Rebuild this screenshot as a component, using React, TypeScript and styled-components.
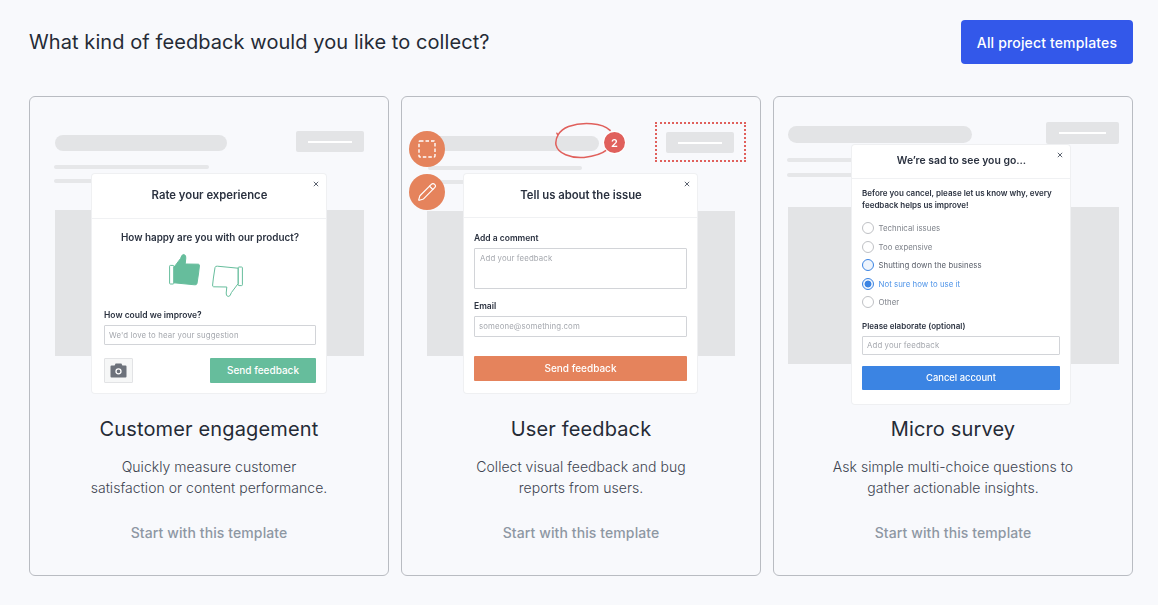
import styled, { createGlobalStyle } from "styled-components";
import { Pencil } from "lucide-react";

const GlobalStyle = createGlobalStyle`
  html, body {
    margin: 0;
    background: #f8f9fc;
    font-family: Inter, "Liberation Sans", sans-serif;
    color: #252b36;
  }
  * { box-sizing: border-box; }
`;

function ThumbIcon(props: { down?: boolean }) {
  return (
    <ThumbSvg viewBox="0 0 31 32" $down={props.down}>
      <rect x="0.6" y="11.4" width="4.2" height="18.6" rx="0.8" fill="#fff" stroke="#66bd9c" strokeWidth="1" />
      <path
        d="M5 13.2 L11.6 4.4 Q12.6 0.4 14.8 0.5 Q17.2 1 16.8 4 L16.2 10 L29.4 10.2 Q30.6 10.4 30.4 12 L29.6 19 L28 29.4 Q27.6 31.2 25.6 30.8 L5 28.8 Z"
        fill={props.down ? "#fff" : "#66bd9c"}
        stroke="#66bd9c"
        strokeWidth="1"
        strokeLinejoin="round"
      />
    </ThumbSvg>
  );
}

function CloseIcon() {
  return (
    <CloseSvg viewBox="0 0 6 6">
      <path d="M0.8 0.8 L5.2 5.2 M5.2 0.8 L0.8 5.2" stroke="#4b5261" strokeWidth="0.9" />
    </CloseSvg>
  );
}

function CameraIcon() {
  return (
    <svg width="17" height="15" viewBox="0 0 17 15">
      <path
        d="M1.5 2.5 H4.6 L5.6 0.5 H11.4 L12.4 2.5 H15.5 Q16.5 2.5 16.5 3.5 V13.5 Q16.5 14.5 15.5 14.5 H1.5 Q0.5 14.5 0.5 13.5 V3.5 Q0.5 2.5 1.5 2.5 Z"
        fill="#6d727b"
      />
      <circle cx="8.5" cy="8.3" r="2.5" fill="none" stroke="#fff" strokeWidth="1.3" />
    </svg>
  );
}

function SelectIcon() {
  return (
    <svg width="18" height="18" viewBox="0 0 18 18">
      <rect x="1" y="1" width="16" height="16" rx="1" fill="none" stroke="#fff" strokeWidth="1.4" strokeDasharray="3.5 2" />
    </svg>
  );
}

function Backdrop(props: { pill: number[]; btn: number[]; line: number[]; rows: number[][]; block: number[] }) {
  return (
    <>
      <Pill $x={props.pill[0]} $y={props.pill[1]} $w={props.pill[2]} $h={props.pill[3]} />
      <GhostButton $x={props.btn[0]} $y={props.btn[1]} $w={props.btn[2]} $h={props.btn[3]}>
        <GhostLine $w={props.line[0]} />
      </GhostButton>
      {props.rows.map((r, i) => (
        <TextRow key={i} $x={r[0]} $y={r[1]} $w={r[2]} />
      ))}
      <Block $x={props.block[0]} $y={props.block[1]} $w={props.block[2]} $h={props.block[3]} />
    </>
  );
}

function EngagementPreview() {
  return (
    <Illustration>
      <Backdrop pill={[25, 38, 172, 16]} btn={[266, 34, 68, 21]} line={[44]} rows={[[24, 68, 155], [24, 82, 60]]} block={[25, 113, 309, 146]} />
      <Modal $x={62} $y={77} $w={234} $h={219}>
        <ModalHeader $h={45}>
          <ModalTitle>Rate your experience</ModalTitle>
          <CloseIcon />
        </ModalHeader>
        <ModalBody $pad="11px 10px 0 12px">
          <Question>How happy are you with our product?</Question>
          <Thumbs>
            <ThumbIcon />
            <ThumbIcon down />
          </Thumbs>
          <FieldLabel>How could we improve?</FieldLabel>
          <FakeInput $h={20}>We'd love to hear your suggestion</FakeInput>
          <ActionRow>
            <CameraButton>
              <CameraIcon />
            </CameraButton>
            <SendButton $bg="#66bd9c" $w={106}>
              Send feedback
            </SendButton>
          </ActionRow>
        </ModalBody>
      </Modal>
    </Illustration>
  );
}

function FeedbackPreview() {
  return (
    <Illustration>
      <Backdrop pill={[25, 39, 172, 15]} btn={[264, 35, 68, 21]} line={[44]} rows={[[26, 69, 154], [26, 83, 60]]} block={[25, 114, 308, 145]} />
      <DottedFrame />
      <Squiggle viewBox="0 0 60 40">
        <path
          d="M57 9 C49 1 28 0 14 5 C4 9 0 17 1 24 C3 33 16 38 30 37 C40 36 49 33 54 29 M2 12 L3 14"
          fill="none"
          stroke="#e0605c"
          strokeWidth="1.6"
          strokeLinecap="round"
        />
      </Squiggle>
      <CountBadge>2</CountBadge>
      <ToolCircle $y={34}>
        <SelectIcon />
      </ToolCircle>
      <ToolCircle $y={77}>
        <Pencil size={20} strokeWidth={1.4} color="#fff" />
      </ToolCircle>
      <Modal $x={62} $y={77} $w={233} $h={219}>
        <ModalHeader $h={44}>
          <ModalTitle>Tell us about the issue</ModalTitle>
          <CloseIcon />
        </ModalHeader>
        <ModalBody $pad="15px 10px 0 10px">
          <FieldLabel>Add a comment</FieldLabel>
          <FakeInput $h={41} $top>
            Add your feedback
          </FakeInput>
          <FieldLabel $gap={12}>Email</FieldLabel>
          <FakeInput $h={21}>someone@something.com</FakeInput>
          <SendButton $bg="#e5835c" $mt={19}>
            Send feedback
          </SendButton>
        </ModalBody>
      </Modal>
    </Illustration>
  );
}

const surveyOptions = [
  { label: "Technical issues", state: "idle" },
  { label: "Too expensive", state: "idle" },
  { label: "Shutting down the business", state: "hover" },
  { label: "Not sure how to use it", state: "checked" },
  { label: "Other", state: "idle" },
] as const;

function SurveyPreview() {
  return (
    <Illustration>
      <Backdrop pill={[14, 29, 184, 17]} btn={[272, 25, 73, 22]} line={[47]} rows={[[13, 61, 70], [13, 76, 70]]} block={[14, 110, 331, 157]} />
      <Modal $x={78} $y={48} $w={218} $h={259}>
        <ModalHeader $h={34}>
          <ModalTitle $size={10.4}>We’re sad to see you go...</ModalTitle>
          <CloseIcon />
        </ModalHeader>
        <ModalBody $pad="9px 10px 0 10px">
          <Intro>Before you cancel, please let us know why, every feedback helps us improve!</Intro>
          <OptionList>
            {surveyOptions.map((o) => (
              <Option key={o.label} $state={o.state}>
                <Radio $state={o.state} />
                {o.label}
              </Option>
            ))}
          </OptionList>
          <FieldLabel $gap={13} $size={8}>
            Please elaborate (optional)
          </FieldLabel>
          <FakeInput $h={19}>Add your feedback</FakeInput>
          <SendButton $bg="#3b84e3" $mt={11} $h={24} $size={9.4}>
            Cancel account
          </SendButton>
        </ModalBody>
      </Modal>
    </Illustration>
  );
}

export default function App() {
  return (
    <>
      <GlobalStyle />
      <Page>
        <Header>
          <Title>What kind of feedback would you like to collect?</Title>
          <PrimaryButton>All project templates</PrimaryButton>
        </Header>
        <CardGrid>
          <TemplateCard>
            <EngagementPreview />
            <CardTitle>Customer engagement</CardTitle>
            <CardText>
              Quickly measure customer
              <br />
              satisfaction or content performance.
            </CardText>
            <CardLink>Start with this template</CardLink>
          </TemplateCard>
          <TemplateCard>
            <FeedbackPreview />
            <CardTitle>User feedback</CardTitle>
            <CardText>
              Collect visual feedback and bug
              <br />
              reports from users.
            </CardText>
            <CardLink>Start with this template</CardLink>
          </TemplateCard>
          <TemplateCard>
            <SurveyPreview />
            <CardTitle>Micro survey</CardTitle>
            <CardText>
              Ask simple multi-choice questions to
              <br />
              gather actionable insights.
            </CardText>
            <CardLink>Start with this template</CardLink>
          </TemplateCard>
        </CardGrid>
      </Page>
    </>
  );
}

const Page = styled.div`
  width: 1158px;
  height: 605px;
  padding: 20px 25px 0 29px;
  overflow: hidden;
`;

const Header = styled.header`
  display: flex;
  justify-content: space-between;
  align-items: center;
  height: 44px;
`;

const Title = styled.h1`
  margin: 0;
  font-size: 20px;
  font-weight: 400;
  line-height: 28px;
  letter-spacing: 0.08px;
  color: #252b36;
`;

const PrimaryButton = styled.button`
  width: 172px;
  height: 44px;
  border: 0;
  border-radius: 4px;
  background: #3358ea;
  color: #fff;
  font: 500 14px Inter, sans-serif;
  letter-spacing: 0.15px;
`;

const CardGrid = styled.div`
  display: grid;
  grid-template-columns: repeat(3, 360px);
  gap: 12px;
  margin-top: 32px;
`;

const TemplateCard = styled.article`
  height: 480px;
  border: 1px solid #b9bcc2;
  border-radius: 6px;
  text-align: center;
`;

/* the previews are one soft, scaled-down picture in the original */
const Illustration = styled.div`
  position: relative;
  height: 305px;
  filter: blur(0.25px);
`;

const Pill = styled.div<{ $x: number; $y: number; $w: number; $h: number }>`
  position: absolute;
  left: ${(p) => p.$x}px;
  top: ${(p) => p.$y}px;
  width: ${(p) => p.$w}px;
  height: ${(p) => p.$h}px;
  border-radius: 9px;
  background: #e3e4e6;
`;

const GhostButton = styled.div<{ $x: number; $y: number; $w: number; $h: number }>`
  position: absolute;
  left: ${(p) => p.$x}px;
  top: ${(p) => p.$y}px;
  width: ${(p) => p.$w}px;
  height: ${(p) => p.$h}px;
  display: flex;
  align-items: center;
  justify-content: center;
  border-radius: 2px;
  background: #e3e4e6;
`;

const GhostLine = styled.div<{ $w: number }>`
  width: ${(p) => p.$w}px;
  height: 2px;
  background: #fff;
`;

const TextRow = styled.div<{ $x: number; $y: number; $w: number }>`
  position: absolute;
  left: ${(p) => p.$x}px;
  top: ${(p) => p.$y}px;
  width: ${(p) => p.$w}px;
  height: 3.5px;
  border-radius: 2px;
  background: #e6e7e9;
`;

const Block = styled.div<{ $x: number; $y: number; $w: number; $h: number }>`
  position: absolute;
  left: ${(p) => p.$x}px;
  top: ${(p) => p.$y}px;
  width: ${(p) => p.$w}px;
  height: ${(p) => p.$h}px;
  background: #e3e4e6;
`;

const Modal = styled.div<{ $x: number; $y: number; $w: number; $h: number }>`
  position: absolute;
  left: ${(p) => p.$x}px;
  top: ${(p) => p.$y}px;
  width: ${(p) => p.$w}px;
  height: ${(p) => p.$h}px;
  display: flex;
  flex-direction: column;
  border-radius: 3px;
  background: #fff;
  box-shadow: 0 0 0 1px #eff0f2;
  text-align: left;
`;

const ModalHeader = styled.div<{ $h: number }>`
  position: relative;
  flex: none;
  display: flex;
  align-items: center;
  justify-content: center;
  height: ${(p) => p.$h}px;
  padding: 0 0 2px 1px;
  border-bottom: 1px solid #f0f1f3;
`;

const ModalTitle = styled.div<{ $size?: number }>`
  font-size: ${(p) => p.$size ?? 11.3}px;
  font-weight: 600;
  color: #2b3240;
`;

const CloseSvg = styled.svg`
  position: absolute;
  top: 7px;
  right: 7px;
  width: 6px;
  height: 6px;
`;

const ModalBody = styled.div<{ $pad: string }>`
  display: flex;
  flex-direction: column;
  padding: ${(p) => p.$pad};
`;

const Question = styled.div`
  text-align: center;
  font-size: 9.9px;
  font-weight: 600;
  line-height: 14px;
  color: #2b3240;
`;

const Thumbs = styled.div`
  display: flex;
  justify-content: center;
  gap: 12px;
  height: 56px;
  margin-top: 10px;
  padding-right: 8px;
`;

const ThumbSvg = styled.svg<{ $down?: boolean }>`
  width: 31px;
  height: 32px;
  overflow: visible;
  transform: ${(p) => (p.$down ? "translateY(11px) rotate(180deg)" : "none")};
`;

const FieldLabel = styled.div<{ $gap?: number; $size?: number }>`
  margin-top: ${(p) => p.$gap ?? 0}px;
  margin-bottom: 4px;
  font-size: ${(p) => p.$size ?? 8.5}px;
  font-weight: 600;
  line-height: 11px;
  color: #2b3240;
`;

const FakeInput = styled.div<{ $h: number; $top?: boolean }>`
  display: flex;
  align-items: ${(p) => (p.$top ? "flex-start" : "center")};
  height: ${(p) => p.$h}px;
  padding: ${(p) => (p.$top ? "4px 5px" : "0 4px")};
  border: 1px solid #d2d4d8;
  border-radius: 1px;
  background: #fff;
  font-size: 7.8px;
  letter-spacing: 0.12px;
  line-height: 11px;
  color: #a5a8ae;
`;

const ActionRow = styled.div`
  display: flex;
  justify-content: space-between;
  margin-top: 13px;
`;

const CameraButton = styled.div`
  display: flex;
  align-items: center;
  justify-content: center;
  width: 29px;
  height: 25px;
  border: 1px solid #e2e3e5;
  border-radius: 1px;
  background: #f6f7f7;
`;

const SendButton = styled.div<{ $bg: string; $w?: number; $mt?: number; $h?: number; $size?: number }>`
  display: flex;
  align-items: center;
  justify-content: center;
  width: ${(p) => (p.$w ? `${p.$w}px` : "100%")};
  height: ${(p) => p.$h ?? 25}px;
  margin-top: ${(p) => p.$mt ?? 0}px;
  padding-bottom: 1px;
  border-radius: 1px;
  background: ${(p) => p.$bg};
  color: #fff;
  font-size: ${(p) => p.$size ?? 10}px;
  font-weight: 500;
`;

const DottedFrame = styled.div`
  position: absolute;
  left: 253px;
  top: 25px;
  width: 91px;
  height: 40px;
  border: 2px dotted #e0605c;
`;

const Squiggle = styled.svg`
  position: absolute;
  left: 153px;
  top: 24px;
  width: 58px;
  height: 40px;
`;

const CountBadge = styled.div`
  position: absolute;
  left: 202px;
  top: 35px;
  width: 21px;
  height: 21px;
  display: flex;
  align-items: center;
  justify-content: center;
  border-radius: 50%;
  background: #e0605c;
  box-shadow: 0 0 0 1px #fff;
  color: #fff;
  font-size: 11px;
  font-weight: 600;
`;

const ToolCircle = styled.div<{ $y: number }>`
  position: absolute;
  left: 7px;
  top: ${(p) => p.$y}px;
  width: 36px;
  height: 36px;
  display: flex;
  align-items: center;
  justify-content: center;
  border-radius: 50%;
  background: #e5835c;
`;

const Intro = styled.p`
  margin: 0;
  font-size: 8px;
  font-weight: 600;
  line-height: 11.5px;
  color: #2b3240;
`;

const OptionList = styled.div`
  display: flex;
  flex-direction: column;
  gap: 6.5px;
  margin-top: 11px;
`;

type RadioState = "idle" | "hover" | "checked";

const Option = styled.div<{ $state: RadioState }>`
  display: flex;
  align-items: center;
  gap: 4.5px;
  height: 12px;
  font-size: 7.8px;
  letter-spacing: 0.05px;
  color: ${(p) => (p.$state === "checked" ? "#4f94e8" : p.$state === "hover" ? "#5b606b" : "#7f838b")};
`;

const Radio = styled.span<{ $state: RadioState }>`
  flex: none;
  width: 12px;
  height: 12px;
  border-radius: 50%;
  border: 1px solid ${(p) => (p.$state === "idle" ? "#bfc1c5" : "#3b84e3")};
  background: ${(p) =>
    p.$state === "checked"
      ? "radial-gradient(circle, #3b84e3 0 3.2px, #eef4fc 3.7px)"
      : p.$state === "hover"
        ? "#eef4fc"
        : "#fff"};
`;

const CardTitle = styled.h2`
  margin: 13px 0 0;
  font-size: 20px;
  font-weight: 400;
  line-height: 28px;
  letter-spacing: 0.15px;
  color: #252b36;
`;

const CardText = styled.p`
  margin: 13px 0 0;
  font-size: 14px;
  line-height: 21px;
  letter-spacing: 0.03px;
  font-weight: 300;
  color: #3d4450;
`;

const CardLink = styled.div`
  margin-top: 25px;
  font-size: 14px;
  font-weight: 500;
  line-height: 20px;
  letter-spacing: 0.1px;
  color: #8e97a3;
`;
